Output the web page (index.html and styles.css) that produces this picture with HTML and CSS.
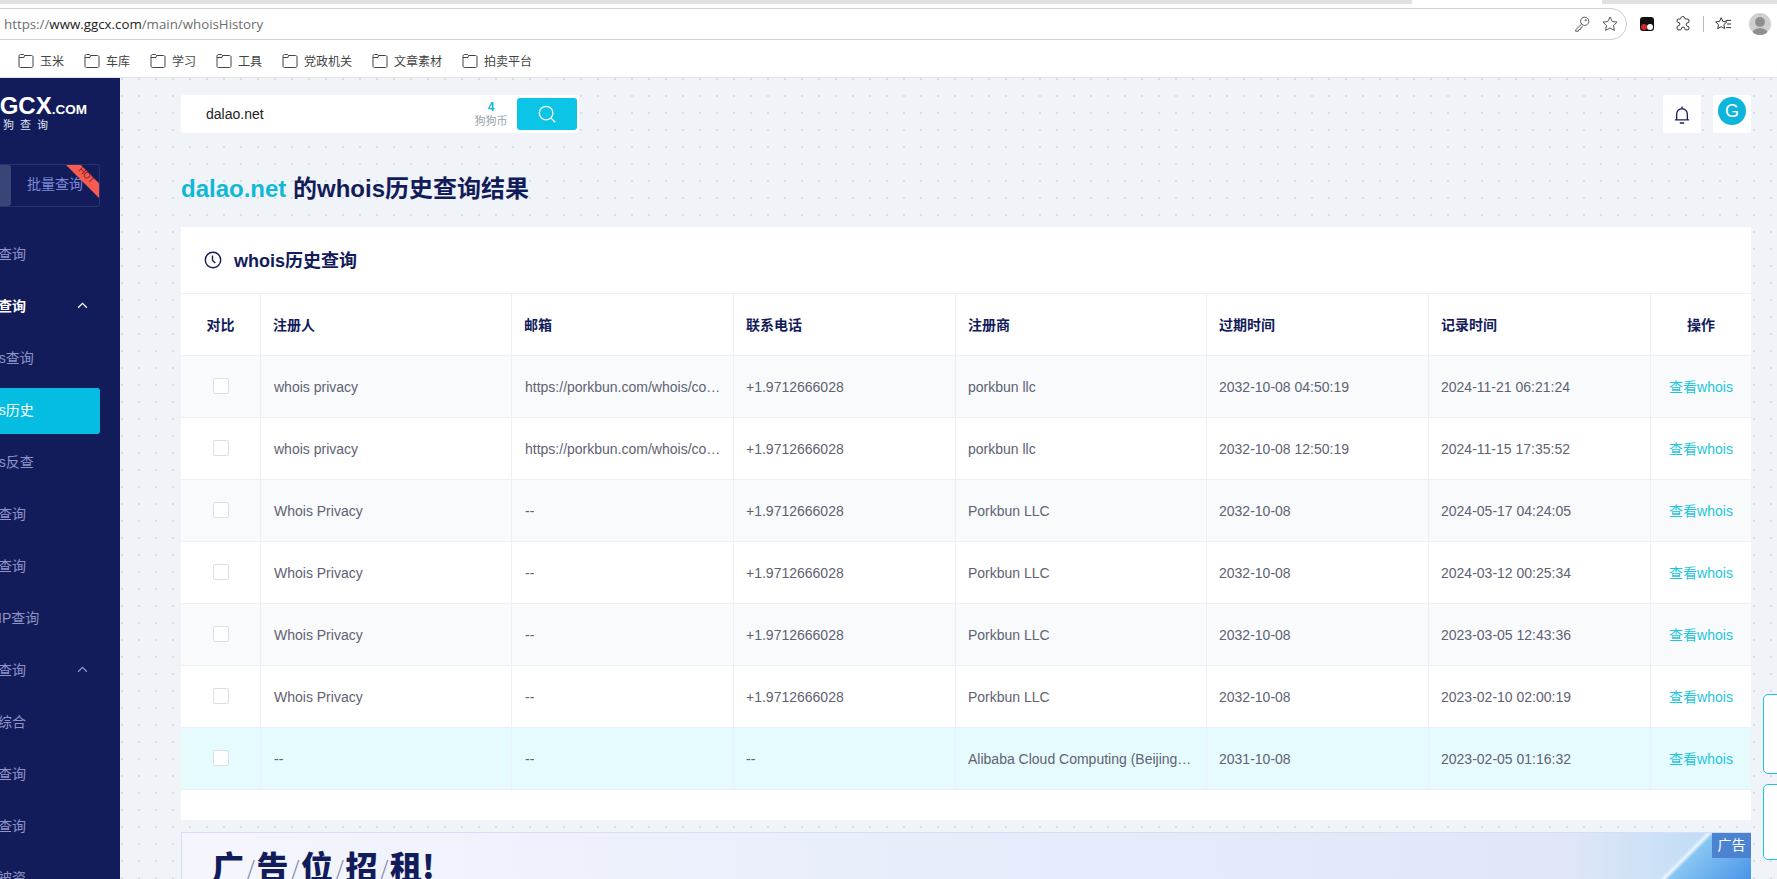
FILE: index.html
```html
<!DOCTYPE html>
<html>
<head>
<title>whois历史查询</title>
<meta charset="utf-8"/>
<link rel="stylesheet" href="styles.css">
</head>
<body>

<div class="browser">
  <div class="tabstrip"><div class="tab"></div></div>
  <div class="toolbar">
    <div class="urlbar">
      <div class="url"><span class="url-dim">https://</span>www.ggcx.com<span class="url-dim">/main/whoisHistory</span></div>
      <svg class="tool-icon" viewBox="0 0 20 20"><circle cx="13" cy="7" r="4.6"/><path d="M9.6 10 3 16.5V18h3l.6-1.8 2-.4.4-2 2-.8"/><circle cx="14.2" cy="5.8" r=".7"/></svg>
      <svg class="tool-icon" viewBox="0 0 20 20"><path d="M10 2.2l2.4 5 5.5.7-4 3.8 1 5.4-4.900-2.600-4.900 2.600 1-5.400-4-3.800 5.500-.7z"/></svg>
    </div>
    <div class="ext-box"><span class="ext-red"></span><span class="ext-white"></span></div>
    <svg class="tool-icon puzzle" viewBox="0 0 20 20"><path d="M7.500 3.500a2.300 2.300 0 0 1 4.500 0c0 .6.300 1 1 1h2.500c.6 0 1 .4 1 1v2.300c0 .5-.5.8-1 .8a2 2 0 0 0 0 4c.5 0 1 .3 1 .8v2.100c0 .6-.4 1-1 1h-2.600c-.5 0-.8-.5-.8-1a2 2 0 0 0-4 0c0 .5-.3 1-.8 1H4.500c-.6 0-1-.4-1-1v-2.600c0-.5.500-.8 1-.8a2 2 0 0 0 0-4c-.5 0-1-.3-1-.8V5.500c0-.6.400-1 1-1h2c.6 0 1-.4 1-1z"/></svg>
    <div class="tool-sep"></div>
    <svg class="tool-icon fav" viewBox="0 0 20 20"><path d="M8 3l1.900 4.200 4.300.5-3.200 3 .9 4.500L8 13l-3.900 2.200.9-4.500-3.200-3 4.300-.5z"/><path d="M13 6h6M14.500 10H19M13.500 14H19"/></svg>
    <div class="profile"><span class="profile-head"></span><span class="profile-body"></span></div>
  </div>
  <div class="bookmarks">
    <div class="bookmark"><svg class="folder" viewBox="0 0 16 16"><path d="M1 3.500V13c0 1 .6 1.500 1.500 1.500h11c.9 0 1.500-.5 1.500-1.500V4c0-.9-.6-1.500-1.500-1.500H6.500L5.500 1.500h-3C1.600 1.500 1 2.200 1 3.500zM1 4.500h5l.5-2"/></svg>玉米</div>
    <div class="bookmark"><svg class="folder" viewBox="0 0 16 16"><path d="M1 3.500V13c0 1 .6 1.500 1.500 1.500h11c.9 0 1.500-.5 1.500-1.500V4c0-.9-.6-1.500-1.500-1.500H6.500L5.500 1.500h-3C1.600 1.500 1 2.200 1 3.500zM1 4.500h5l.5-2"/></svg>车库</div>
    <div class="bookmark"><svg class="folder" viewBox="0 0 16 16"><path d="M1 3.500V13c0 1 .6 1.500 1.500 1.500h11c.9 0 1.500-.5 1.500-1.500V4c0-.9-.6-1.500-1.500-1.500H6.500L5.500 1.500h-3C1.600 1.500 1 2.200 1 3.500zM1 4.500h5l.5-2"/></svg>学习</div>
    <div class="bookmark"><svg class="folder" viewBox="0 0 16 16"><path d="M1 3.500V13c0 1 .6 1.500 1.500 1.500h11c.9 0 1.500-.5 1.500-1.500V4c0-.9-.6-1.500-1.500-1.500H6.500L5.500 1.500h-3C1.600 1.500 1 2.200 1 3.500zM1 4.500h5l.5-2"/></svg>工具</div>
    <div class="bookmark"><svg class="folder" viewBox="0 0 16 16"><path d="M1 3.500V13c0 1 .6 1.500 1.500 1.500h11c.9 0 1.500-.5 1.500-1.500V4c0-.9-.6-1.500-1.500-1.500H6.500L5.500 1.500h-3C1.600 1.500 1 2.200 1 3.500zM1 4.500h5l.5-2"/></svg>党政机关</div>
    <div class="bookmark"><svg class="folder" viewBox="0 0 16 16"><path d="M1 3.500V13c0 1 .6 1.500 1.500 1.500h11c.9 0 1.500-.5 1.500-1.500V4c0-.9-.6-1.500-1.500-1.500H6.500L5.500 1.500h-3C1.600 1.500 1 2.200 1 3.500zM1 4.500h5l.5-2"/></svg>文章素材</div>
    <div class="bookmark"><svg class="folder" viewBox="0 0 16 16"><path d="M1 3.500V13c0 1 .6 1.500 1.500 1.500h11c.9 0 1.500-.5 1.500-1.500V4c0-.9-.6-1.500-1.500-1.500H6.500L5.500 1.500h-3C1.600 1.500 1 2.200 1 3.500zM1 4.500h5l.5-2"/></svg>拍卖平台</div>
  </div>
</div>

<div class="app">
  <div class="sidebar">
    <div class="sidebar-inner">
      <div class="logo">
        <div class="logo-main">GGCX<span>.COM</span></div>
        <div class="logo-sub">狗狗查询</div>
      </div>
      <div class="mode-tabs">
        <div class="mode-tab mode-on">单个</div>
        <div class="mode-tab">批量查询<span class="hot"><b>HOT</b></span></div>
      </div>
      <ul class="menu">
        <li>域名查询</li>
        <li class="open">历史查询<svg class="chev" viewBox="0 0 12 8"><path d="M1 6.500l5-5 5 5"/></svg></li>
        <li>whois查询</li>
        <li class="active">whois历史</li>
        <li>whois反查</li>
        <li>备案查询</li>
        <li>建站查询</li>
        <li>反向IP查询</li>
        <li class="dim-open">综合查询<svg class="chev" viewBox="0 0 12 8"><path d="M1 6.500l5-5 5 5"/></svg></li>
        <li>信息综合</li>
        <li>权重查询</li>
        <li>外链查询</li>
        <li>域名被资</li>
      </ul>
    </div>
  </div>

  <div class="main">
    <div class="topbar">
      <div class="search">
        <div class="search-text">dalao.net</div>
        <div class="coin"><b>4</b><span>狗狗币</span></div>
        <div class="search-btn"><svg viewBox="0 0 22 22"><circle cx="10" cy="10" r="7.500"/><path d="M15.500 15.500l4.500 4.500"/></svg></div>
      </div>
      <div class="top-right">
        <div class="top-box"><svg class="bell" viewBox="0 0 18 22"><path d="M3 16.500V10a6 6 0 0 1 12 0v6.500M1 16.500h16M9 1.500V4M6.500 20h5"/></svg></div>
        <div class="top-box"><div class="avatar">G</div></div>
      </div>
    </div>

    <h1 class="page-title"><span>dalao.net</span> 的whois历史查询结果</h1>

    <div class="card">
      <div class="card-head">
        <svg class="clock" viewBox="0 0 18 18"><circle cx="9" cy="9" r="7.700"/><path d="M8.500 4.500V9.500l2.800 2.500"/></svg>
        <span class="card-title">whois历史查询</span>
      </div>
      <table class="result">
        <colgroup>
          <col class="c-check"><col class="c-name"><col class="c-mail"><col class="c-phone"><col class="c-reg"><col class="c-exp"><col class="c-rec"><col class="c-op">
        </colgroup>
        <thead>
          <tr><th class="mid">对比</th><th>注册人</th><th>邮箱</th><th>联系电话</th><th>注册商</th><th>过期时间</th><th>记录时间</th><th class="mid">操作</th></tr>
        </thead>
        <tbody>
          <tr class="stripe"><td class="mid"><i class="check"></i></td><td>whois privacy</td><td>https://porkbun.com/whois/contact?domain=dalao.net</td><td>+1.9712666028</td><td>porkbun llc</td><td>2032-10-08 04:50:19</td><td>2024-11-21 06:21:24</td><td class="mid"><a class="look">查看whois</a></td></tr>
          <tr><td class="mid"><i class="check"></i></td><td>whois privacy</td><td>https://porkbun.com/whois/contact?domain=dalao.net</td><td>+1.9712666028</td><td>porkbun llc</td><td>2032-10-08 12:50:19</td><td>2024-11-15 17:35:52</td><td class="mid"><a class="look">查看whois</a></td></tr>
          <tr class="stripe"><td class="mid"><i class="check"></i></td><td>Whois Privacy</td><td>--</td><td>+1.9712666028</td><td>Porkbun LLC</td><td>2032-10-08</td><td>2024-05-17 04:24:05</td><td class="mid"><a class="look">查看whois</a></td></tr>
          <tr><td class="mid"><i class="check"></i></td><td>Whois Privacy</td><td>--</td><td>+1.9712666028</td><td>Porkbun LLC</td><td>2032-10-08</td><td>2024-03-12 00:25:34</td><td class="mid"><a class="look">查看whois</a></td></tr>
          <tr class="stripe"><td class="mid"><i class="check"></i></td><td>Whois Privacy</td><td>--</td><td>+1.9712666028</td><td>Porkbun LLC</td><td>2032-10-08</td><td>2023-03-05 12:43:36</td><td class="mid"><a class="look">查看whois</a></td></tr>
          <tr><td class="mid"><i class="check"></i></td><td>Whois Privacy</td><td>--</td><td>+1.9712666028</td><td>Porkbun LLC</td><td>2032-10-08</td><td>2023-02-10 02:00:19</td><td class="mid"><a class="look">查看whois</a></td></tr>
          <tr class="hilite"><td class="mid"><i class="check"></i></td><td>--</td><td>--</td><td>--</td><td>Alibaba Cloud Computing (Beijing) Co., Ltd.</td><td>2031-10-08</td><td>2023-02-05 01:16:32</td><td class="mid"><a class="look">查看whois</a></td></tr>
        </tbody>
      </table>
    </div>

    <div class="ad">
      <div class="ad-title">广<i>/</i>告<i>/</i>位<i>/</i>招<i>/</i>租!</div>
      <div class="ad-tag">广告</div>
    </div>

    <div class="float-box float-a"></div>
    <div class="float-box float-b"></div>
  </div>
</div>

</body>
</html>
```

FILE: styles.css
```css
html, body { margin:0; padding:0; height:100%; }
body {
  display:flex;
  flex-direction:column;
  height:879px;
  overflow:hidden;
  font-family:"Liberation Sans", "Noto Sans CJK SC", sans-serif;
  font-size:14px;
  background:#fff;
}

/* browser chrome */
.browser { height:77px; flex:none; background:#fff; border-bottom:1px solid #e2e4e7; }
.tabstrip { height:4px; background:#e1e1e1; position:relative; }
.tab { position:absolute; left:1412px; width:190px; top:0; height:4px; background:#fff; }
.toolbar { height:32px; margin-top:4px; display:flex; align-items:center; }
.urlbar {
  width:1647px;
  height:32px;
  box-sizing:border-box;
  margin-left:-20px;
  padding:0 7px 0 23px;
  border:1px solid #cfcfcf;
  border-radius:16px;
  display:flex;
  align-items:center;
  gap:10px;
  flex:none;
}
.url { flex:1; font-family:"Open Sans", "Liberation Sans", sans-serif; font-size:13.300px; color:#222; }
.url-dim { color:#6e6e6e; }
.tool-icon { width:18px; height:18px; fill:none; stroke:#555; stroke-width:1.100; flex:none; }
.ext-box {
  width:14px;
  height:14px;
  margin-left:13px;
  background:#111;
  border-radius:3px;
  position:relative;
  flex:none;
}
.ext-red { position:absolute; left:1px; bottom:1px; width:6px; height:6px; border-radius:3px; background:#d9262c; }
.ext-white { position:absolute; right:1px; bottom:1px; width:6px; height:6px; border-radius:3px; background:#fff; }
.puzzle { margin-left:20px; stroke:#333; }
.tool-sep { width:1px; height:16px; background:#bbb; margin-left:11px; flex:none; }
.fav { margin-left:10px; stroke:#333; }
.profile {
  width:22px;
  height:22px;
  margin-left:17px;
  border-radius:50%;
  background:#cfcfcf;
  position:relative;
  overflow:hidden;
  flex:none;
}
.profile-head { position:absolute; left:6px; top:4px; width:10px; height:10px; border-radius:50%; background:#8e8e8e; }
.profile-body { position:absolute; left:3px; top:15px; width:16px; height:12px; border-radius:50%; background:#8e8e8e; }

.bookmarks { display:flex; height:41px; align-items:center; padding-left:18px; }
.bookmark { display:flex; align-items:center; gap:6px; font-size:12px; color:#444; margin-right:20px; }
.folder { width:16px; height:16px; fill:none; stroke:#444; stroke-width:1; }

/* app */
.app { flex:1; display:flex; min-height:0; }
.sidebar { width:120px; flex:none; background:#131c5a; overflow:hidden; }
.sidebar-inner { margin-left:-30px; width:130px; }

.logo { height:86px; padding-top:16px; box-sizing:border-box; padding-left:11px; color:#fff; white-space:nowrap; }
.logo-main { font-size:24px; line-height:24px; font-weight:bold; }
.logo-main span { font-size:13.500px; }
.logo-sub { font-size:11px; line-height:13px; margin-top:-3px; padding-left:5px; color:#dfe2f2; letter-spacing:6px; }

.mode-tabs { display:flex; height:43px; border:1px solid #2a3270; border-radius:3px; box-sizing:border-box; }
.mode-tab {
  flex:1;
  display:flex;
  align-items:center;
  justify-content:center;
  padding-bottom:5px;
  color:#7d88d8;
  font-size:14px;
  position:relative;
  overflow:hidden;
}
.mode-on {
  background:#3b4476;
  color:#c9cde8;
  border-radius:3px;
  flex:none;
  width:40px;
  justify-content:flex-start;
  white-space:nowrap;
}
.hot {
  position:absolute;
  right:0;
  top:0;
  width:33px;
  height:33px;
  background:#f85b50;
  clip-path:polygon(0 0, 45% 0, 100% 55%, 100% 100%);
}
.hot b {
  position:absolute;
  left:11px;
  top:5px;
  font-size:9px;
  line-height:10px;
  font-weight:normal;
  color:#7a1b1b;
  transform:rotate(45deg);
}

.menu { list-style:none; margin:22px 0 0; padding:0; }
.menu li {
  height:52px;
  line-height:50px;
  color:#8e94c6;
  font-size:14px;
  white-space:nowrap;
  position:relative;
  z-index:1;
}
.menu li.open { color:#fff; font-weight:bold; }
.menu li.active { color:#fff; }
.menu li.active:before {
  content:"";
  position:absolute;
  left:-10px;
  right:0;
  top:3px;
  height:46px;
  background:#04bde0;
  border-radius:3px;
  z-index:-1;
}
.chev { position:absolute; left:107px; top:21px; width:11px; height:7px; fill:none; stroke:#fff; stroke-width:1.500; }
.dim-open .chev { stroke:#8e94c6; }

/* main */
.main {
  flex:1;
  position:relative;
  overflow:hidden;
  padding:17px 26px 0 61px;
  background-color:#f0f3f7;
  background-image:radial-gradient(circle at 2px 1px, #dadfe5 1px, transparent 1.500px);
  background-size:17px 17px;
}
.topbar { display:flex; justify-content:space-between; height:38px; }
.search {
  width:398px;
  height:38px;
  background:#fff;
  border-radius:3px;
  display:flex;
  align-items:center;
  padding-left:25px;
  padding-right:2px;
  box-sizing:border-box;
}
.search-text { flex:1; color:#222; font-size:14px; }
.coin { display:flex; flex-direction:column; align-items:center; width:34px; margin-right:9px; }
.coin b { font-size:12px; line-height:14px; color:#0cb5d8; }
.coin span { font-size:11px; line-height:14px; color:#9aa0ab; }
.search-btn {
  width:60px;
  height:32px;
  background:#0cc5e6;
  border-radius:3px;
  display:flex;
  align-items:center;
  justify-content:center;
}
.search-btn svg { width:20px; height:20px; fill:none; stroke:#fff; stroke-width:1.400; }
.top-right { display:flex; gap:12px; }
.top-box { width:38px; height:38px; background:#fff; border-radius:2px; display:flex; justify-content:center; }
.bell { width:16px; height:20px; margin-top:10px; fill:none; stroke:#1b2260; stroke-width:1.500; }
.avatar {
  width:28px;
  height:28px;
  margin-top:2px;
  border-radius:50%;
  background:#0db4dc;
  color:#fff;
  font-size:18px;
  line-height:28px;
  text-align:center;
}

.page-title {
  margin:42px 0 0;
  height:28px;
  line-height:28px;
  font-size:24px;
  font-weight:bold;
  color:#131c5a;
}
.page-title span { color:#10b8d8; }

.card { margin-top:24px; background:#fff; padding-bottom:30px; }
.card-head {
  height:66px;
  border-bottom:1px solid #eef0f3;
  display:flex;
  align-items:center;
  gap:12px;
  padding-left:23px;
  font-size:18px;
  font-weight:bold;
  color:#131c5a;
}
.card-title { margin-bottom:2px; }
.clock { width:18px; height:18px; fill:none; stroke:#131c5a; stroke-width:1.400; }

.result { width:100%; table-layout:fixed; border-collapse:separate; border-spacing:0; }
.c-check { width:80px; }
.c-name { width:251px; }
.c-mail { width:222px; }
.c-phone { width:222px; }
.c-reg { width:251px; }
.c-exp { width:222px; }
.c-rec { width:222px; }
.c-op { width:100px; }
.result th, .result td {
  height:62px;
  box-sizing:border-box;
  border-bottom:1px solid #eef0f3;
  border-right:1px solid #eef0f3;
  text-align:left;
  white-space:nowrap;
  overflow:hidden;
  text-overflow:ellipsis;
}
.result th:last-child, .result td:last-child { border-right:0; }
.result th { padding:0 13px 2px 12px; font-size:14px; font-weight:bold; color:#131c5a; }
.result td { padding:0 9px 0 13px; font-size:14px; color:#5f6273; }
.result td:nth-child(n+4) { padding-left:12px; }
.result td:nth-child(5) { padding-right:13px; }
.result .mid, .result td.mid { text-align:center; padding:0 0 2px; }
.stripe td { background:#f8fafb; }
.hilite td { background:#e6fbfd; }
.check {
  display:inline-block;
  width:16px;
  height:16px;
  box-sizing:border-box;
  background:#fff;
  border:1px solid #dcdfe6;
  border-radius:2px;
  vertical-align:middle;
}
.look { color:#1dc5dc; }

.ad {
  margin-top:12px;
  height:120px;
  position:relative;
  border-top:1px solid #d9dcf6;
  border-left:1px solid #d9dcf6;
  box-sizing:border-box;
  background:
    linear-gradient(135deg, transparent 90.200%, rgba(255,255,255,.7) 90.500%, #86c6f2 90.800%, #4a94e8 95.700%),
    linear-gradient(90deg, #f5f6fd 0%, #e6ecfb 55%, #e1e7f8 88%, #c4def6 96%);
}
.ad-title {
  padding:10px 0 0 30px;
  font-family:"Noto Sans CJK SC", sans-serif;
  font-size:32px;
  line-height:44px;
  font-weight:900;
  color:#131c5a;
}
.ad-title i { font-weight:300; font-style:normal; font-size:24px; color:#7d83a8; padding:0 1.500px; }
.ad-tag {
  position:absolute;
  right:0;
  top:0;
  width:39px;
  height:25px;
  background:#4b83d0;
  color:#fff;
  font-size:14px;
  line-height:25px;
  text-align:center;
}

.float-box {
  position:absolute;
  left:1643px;
  width:40px;
  background:#fff;
  border:1.500px solid #1dc5dc;
  border-radius:5px;
  box-sizing:border-box;
}
.float-a { top:616px; height:80px; }
.float-b { top:706px; height:76px; }
```
